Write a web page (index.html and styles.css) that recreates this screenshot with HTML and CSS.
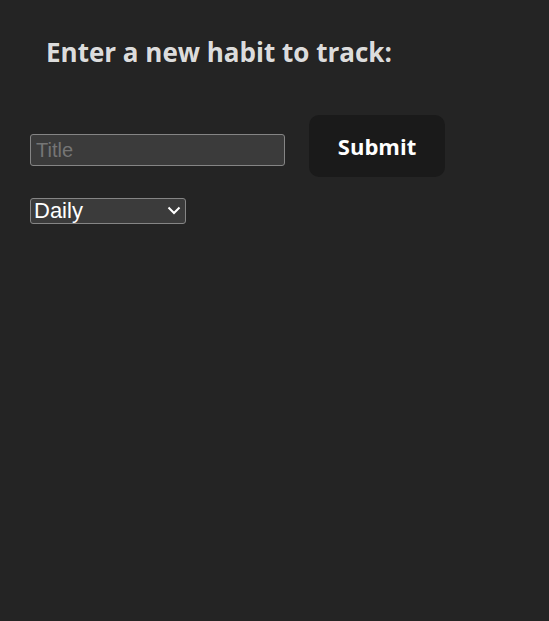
FILE: index.html
```html
<!DOCTYPE html>
<html lang="en">
<head>
<meta charset="utf-8">
<title>Habit Tracker</title>
<link rel="stylesheet" href="styles.css">
</head>
<body>
<main class="page">
  <h2 class="heading">Enter a new habit to track:</h2>
  <form class="habit-form">
    <div class="row">
      <input class="title-input" type="text" placeholder="Title">
      <button class="submit-btn" type="button">Submit</button>
    </div>
    <span class="select-wrap">
      <select class="freq-select">
        <option>Daily</option>
        <option>Weekly</option>
        <option>Monthly</option>
      </select>
      <svg class="chevron" width="14" height="9" viewBox="0 0 14 9" aria-hidden="true">
        <path d="M1.5 1.5 L7 7 L12.5 1.5" fill="none" stroke="#fff" stroke-width="2"/>
      </svg>
    </span>
  </form>
</main>
</body>
</html>
```

FILE: styles.css
```css
:root {
  color-scheme: dark;
}
html, body {
  margin: 0;
  background: #242424;
  color: rgba(255, 255, 255, 0.87);
  font-family: "Open Sans", "Noto Sans", sans-serif;
}
.page {
  padding: 30px 30px;
}
.heading {
  margin: 0 0 0 16px;
  font-size: 26px;
  font-weight: 700;
  line-height: 44px;
}
.habit-form {
  margin-top: 41px;
  display: flex;
  flex-direction: column;
  align-items: flex-start;
  gap: 21px;
}
.row {
  display: flex;
  align-items: flex-start;
  gap: 24px;
}
.title-input {
  box-sizing: border-box;
  width: 255px;
  height: 32px;
  margin: 19px 0 0;
  padding: 1px 5px;
  font-family: "Liberation Sans", Arial, sans-serif;
  font-size: 20px;
  background: #3b3b3b;
  color: #fff;
  border: 1px solid #858585;
  border-radius: 3px;
}
.title-input::placeholder {
  color: #757575;
}
.submit-btn {
  box-sizing: border-box;
  width: 136px;
  height: 62px;
  border: 1px solid transparent;
  border-radius: 10px;
  background: #1a1a1a;
  color: #fff;
  font-family: "Open Sans", "Noto Sans", sans-serif;
  font-size: 22px;
  font-weight: 700;
  cursor: pointer;
}
.select-wrap {
  position: relative;
  display: inline-block;
}
.freq-select {
  box-sizing: border-box;
  width: 156px;
  height: 26px;
  margin: 0;
  padding: 0 24px 0 3px;
  appearance: none;
  -webkit-appearance: none;
  font-family: "Liberation Sans", Arial, sans-serif;
  font-size: 22px;
  line-height: 24px;
  background-color: #3b3b3b;
  color: #fff;
  border: 1px solid #858585;
  border-radius: 3px;
  display: block;
}
.chevron {
  position: absolute;
  right: 5px;
  top: 8px;
  pointer-events: none;
}
```
